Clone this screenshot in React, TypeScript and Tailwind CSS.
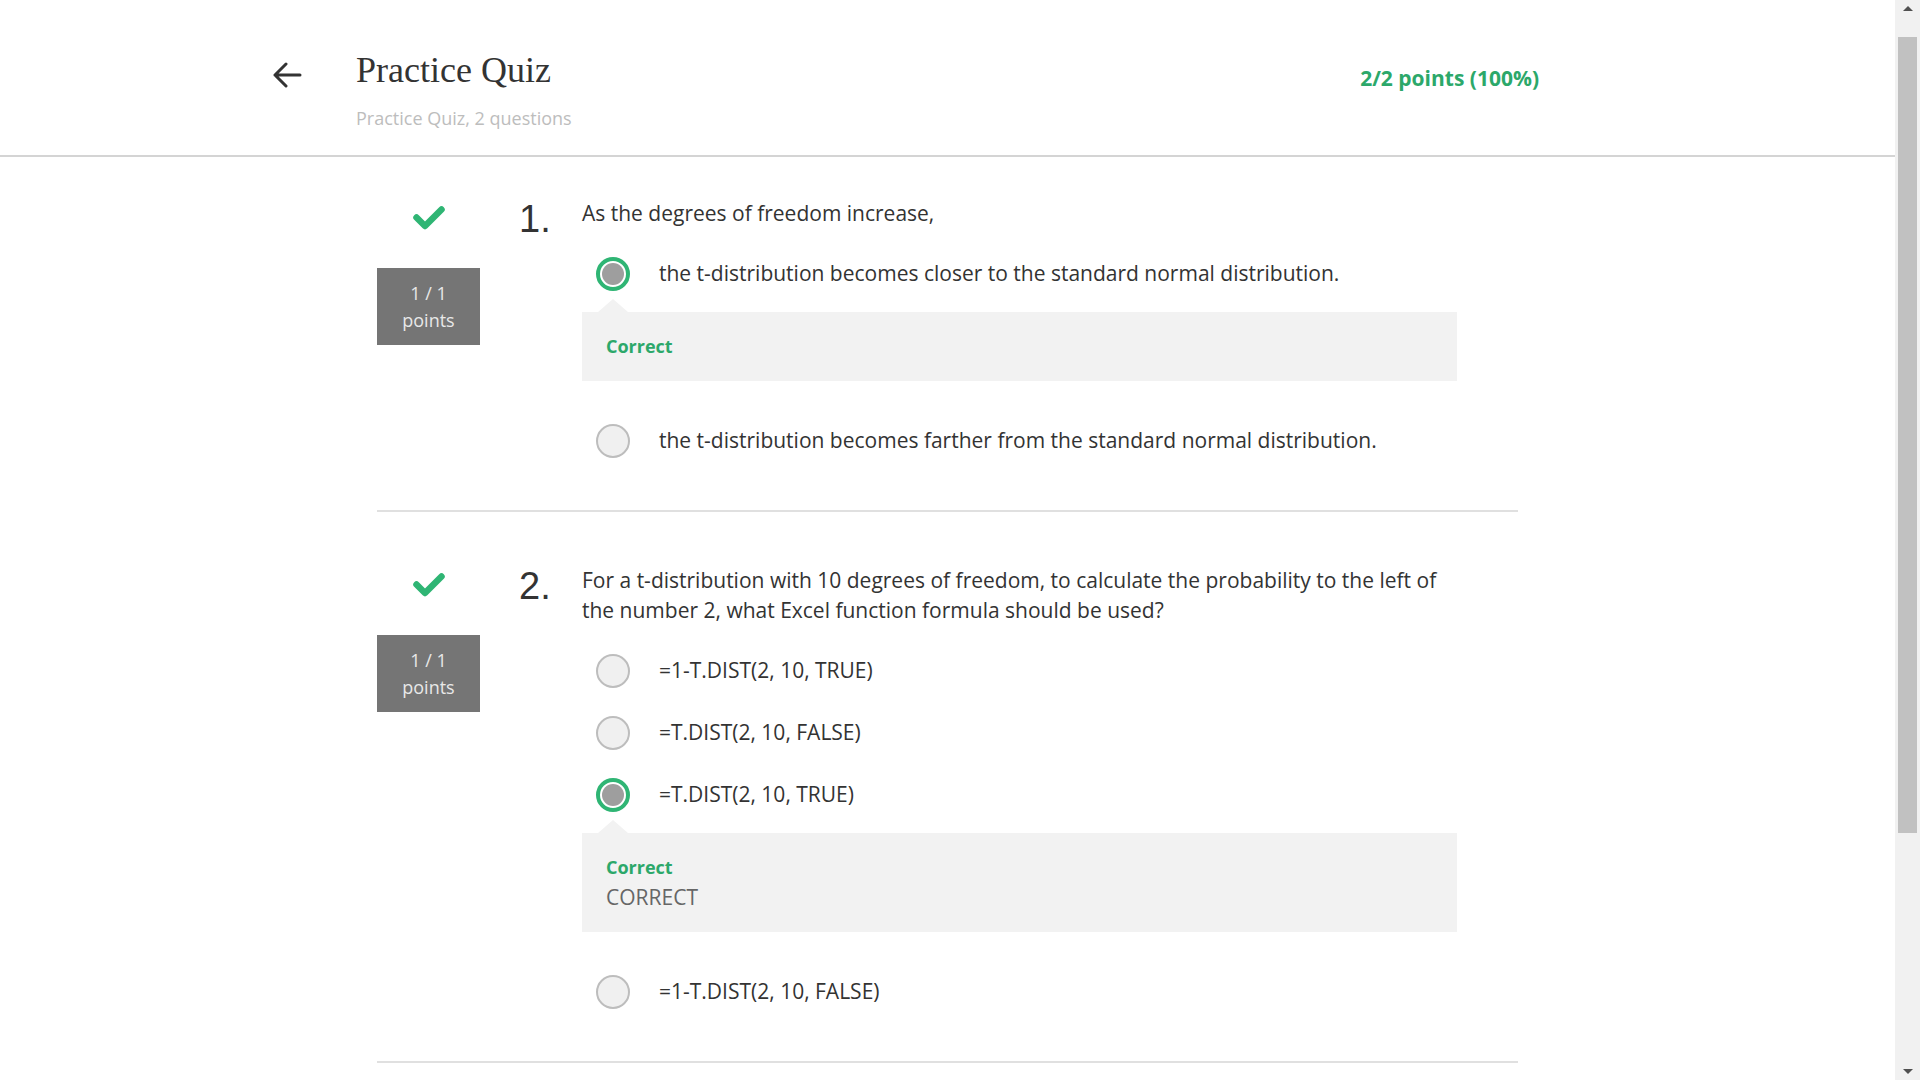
import React from 'react';

type Option = { text: string; selected?: boolean; feedback?: { title: string; body?: string } };
type Question = { n: number; text: string; options: Option[] };

const questions: Question[] = [
  {
    n: 1,
    text: 'As the degrees of freedom increase,',
    options: [
      { text: 'the t-distribution becomes closer to the standard normal distribution.', selected: true, feedback: { title: 'Correct' } },
      { text: 'the t-distribution becomes farther from the standard normal distribution.' },
    ],
  },
  {
    n: 2,
    text: 'For a t-distribution with 10 degrees of freedom, to calculate the probability to the left of the number 2, what Excel function formula should be used?',
    options: [
      { text: '=1-T.DIST(2, 10, TRUE)' },
      { text: '=T.DIST(2, 10, FALSE)' },
      { text: '=T.DIST(2, 10, TRUE)', selected: true, feedback: { title: 'Correct', body: 'CORRECT' } },
      { text: '=1-T.DIST(2, 10, FALSE)' },
    ],
  },
];

function Check() {
  return (
    <svg width="34" height="26" viewBox="0 0 34 26" fill="none">
      <path d="M4.5 12.5 L13 21 L29.5 4.5" stroke="#2fb574" strokeWidth="6.5" strokeLinecap="round" strokeLinejoin="round" />
    </svg>
  );
}

function Radio({ selected }: { selected?: boolean }) {
  if (selected) {
    return (
      <div className="w-[34px] h-[34px] rounded-full border-[4px] border-[#2fb574] bg-white p-[2px] shrink-0">
        <div className="w-full h-full rounded-full bg-[#9e9e9e]" />
      </div>
    );
  }
  return <div className="w-[34px] h-[34px] rounded-full border-2 border-[#bdbdbd] bg-[#f0f0f0] shrink-0" />;
}

function QuestionBlock({ q, first }: { q: Question; first: boolean }) {
  return (
    <div className={`flex items-start border-b-2 border-[#e0e0e0] ${first ? 'pt-[41px]' : 'pt-[53px]'} pb-[44px]`}>
      <div className="w-[103px] flex flex-col items-center pt-[7px] shrink-0">
        <Check />
        <div className="mt-[37px] w-[103px] h-[77px] bg-[#757575] text-[#e8e8e8] text-[18px] leading-[27px] flex flex-col items-center justify-center">
          <span>1 / 1</span>
          <span>points</span>
        </div>
      </div>
      <div className="ml-[39px] w-[63px] shrink-0 pt-[2px] text-[38px] leading-none text-[#333] font-['Liberation_Sans',Arial,sans-serif]">
        {q.n}.
      </div>
      <div className="w-[875px]">
        <p className="text-[21px] leading-[30px] text-[#333]">{q.text}</p>
        <div className="mt-[21px] flex flex-col">
          {q.options.map((o, i) => (
            <div key={i} className={i === 0 ? '' : q.options[i - 1].feedback ? 'mt-[35px]' : 'mt-[12px]'}>
              <div className="h-[50px] flex items-center pl-[14px]">
                <Radio selected={o.selected} />
                <span className="ml-[29px] text-[21px] text-[#333]">{o.text}</span>
              </div>
              {o.feedback && (
                <div className={`relative mt-[13px] bg-[#f2f2f2] px-[24px] pt-[22px] ${o.feedback.body ? 'pb-[21px]' : 'pb-[23px]'}`}>
                  <div className="absolute left-[16px] -top-[13px] w-0 h-0 border-l-[15px] border-r-[15px] border-b-[13px] border-l-transparent border-r-transparent border-b-[#f2f2f2]" />
                  <div className="text-[18px] leading-[24px] font-bold text-[#2ca86a]">{o.feedback.title}</div>
                  {o.feedback.body && <div className="mt-[4px] text-[21px] leading-[28px] text-[#666]">{o.feedback.body}</div>}
                </div>
              )}
            </div>
          ))}
        </div>
      </div>
    </div>
  );
}

function Scrollbar() {
  return (
    <div className="w-[25px] h-full bg-[#f1f1f1] flex flex-col items-center shrink-0">
      <div className="h-[17px] w-full flex items-center justify-center">
        <div className="w-0 h-0 border-l-[5px] border-r-[5px] border-b-[5px] border-l-transparent border-r-transparent border-b-[#505050]" />
      </div>
      <div className="mt-[20px] w-[19px] h-[796px] bg-[#c1c1c1]" />
      <div className="flex-1" />
      <div className="h-[17px] w-full flex items-center justify-center">
        <div className="w-0 h-0 border-l-[5px] border-r-[5px] border-t-[5px] border-l-transparent border-r-transparent border-t-[#505050]" />
      </div>
    </div>
  );
}

export default function App() {
  return (
    <div className="h-screen flex bg-white font-['Open_Sans',sans-serif] overflow-hidden">
      <div className="flex-1 min-w-0 overflow-hidden">
        <header className="h-[157px] border-b-2 border-[#d4d4d4]">
          <div className="mx-auto w-[1183px] flex items-start">
            <div className="-ml-[84px] w-[84px] pt-[62px] shrink-0">
              <svg width="30" height="28" viewBox="0 0 30 28" fill="none">
                <path d="M14 2 L3 13 L14 24 M3 13 H28" stroke="#333" strokeWidth="3" strokeLinecap="round" strokeLinejoin="round" />
              </svg>
            </div>
            <div className="pt-[52px] flex-1">
              <h1 className="text-[36px] leading-none text-[#333] font-['Liberation_Serif',serif]">Practice Quiz</h1>
              <div className="mt-[17px] text-[18px] leading-[26px] text-[#bdbdbd]">Practice Quiz, 2 questions</div>
            </div>
            <div className="pt-[64px] text-[21px] leading-[28px] font-bold text-[#2ca86a]">2/2 points (100%)</div>
          </div>
        </header>
        <main className="mx-auto w-[1141px]">
          {questions.map((q, i) => (
            <QuestionBlock key={q.n} q={q} first={i === 0} />
          ))}
        </main>
      </div>
      <Scrollbar />
    </div>
  );
}
